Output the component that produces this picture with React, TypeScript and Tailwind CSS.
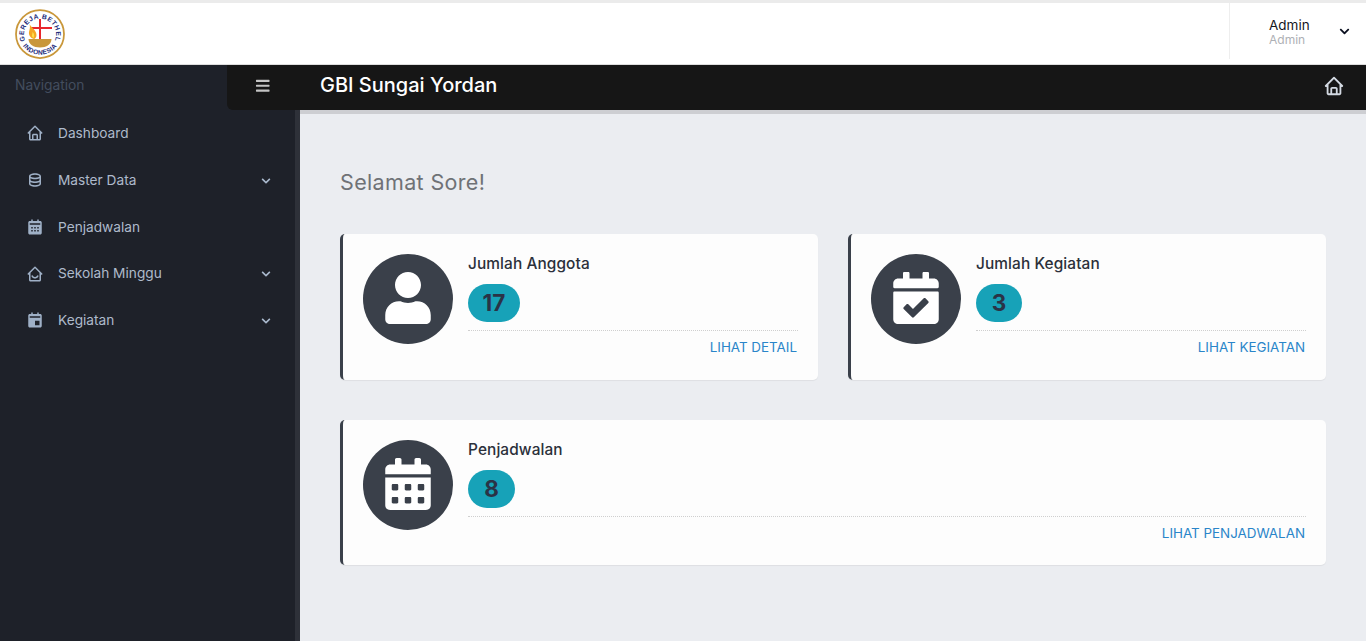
import React from "react";
import { BiHome, BiData, BiSolidCalendar, BiHomeSmile, BiSolidCalendarEvent } from "react-icons/bi";
import { FaBars, FaChevronDown, FaUser, FaCalendarCheck, FaCalendarAlt } from "react-icons/fa";

const font = "font-['Inter','Liberation_Sans',sans-serif]";

function Logo() {
  return (
    <svg width="50" height="50" viewBox="0 0 100 100">
      <circle cx="50" cy="50" r="48" fill="#fff" stroke="#c9973a" strokeWidth="3.5" />
      <defs>
        <path id="arcTop" d="M 19.5 61 A 32 32 0 1 1 80.5 61" />
        <path id="arcBottom" d="M 9 60 A 42.5 42.5 0 0 0 91 60" />
      </defs>
      <text fontSize="13.5" fontWeight="700" fill="#1a2a7a" fontFamily="Liberation Sans, sans-serif" letterSpacing="1">
        <textPath href="#arcTop" startOffset="50%" textAnchor="middle">GEREJA BETHEL</textPath>
      </text>
      <text fontSize="13" fontWeight="700" fill="#1a2a7a" fontFamily="Liberation Sans, sans-serif" letterSpacing="0.8">
        <textPath href="#arcBottom" startOffset="50%" textAnchor="middle">INDONESIA</textPath>
      </text>
      <path d="M48 20h4v16h22v4H52v20h-4V40H32v-4h16z" fill="#e8262c" />
      <path d="M29 30c3 7 14 12 14 22 0 4-2 7-5 8-7-2-11-8-10-14 1-5 3-9 1-16z" fill="#f5a623" />
      <path d="M35 46c3 2 4 6 3 11-2 1-4-1-4-4 0-2 1-4 1-7z" fill="#fde047" />
      <path d="M27 60h46c0 10-10 17-23 17S27 70 27 60z" fill="#c9973a" />
    </svg>
  );
}

function NavItem({ icon, label, chevron }: { icon: React.ReactNode; label: string; chevron?: boolean }) {
  return (
    <div className="flex h-[46.75px] items-center pl-[26px] pr-[24px] text-[13.7px] text-[#aebacb]">
      <span className="flex w-[32px] shrink-0 text-[#9fb0c6]">{icon}</span>
      <span className="flex-1">{label}</span>
      {chevron && <FaChevronDown size={10} className="mt-[1px] text-[#a9b8cc]" />}
    </div>
  );
}

function Card({
  icon,
  title,
  value,
  badgeWidth,
  link,
  className,
}: {
  icon: React.ReactNode;
  title: string;
  value: string;
  badgeWidth: string;
  link: string;
  className: string;
}) {
  return (
    <div className={`flex gap-[15px] rounded-[5px] border-l-[3px] border-[#3a404a] bg-[#fdfdfd] pb-[20px] pl-[20px] pr-[20px] pt-[20px] shadow-[0_1px_1px_rgba(0,0,0,0.06)] ${className}`}>
      <div className="flex h-[90px] w-[90px] shrink-0 items-center justify-center rounded-full bg-[#3a404a] pb-[2px] text-white">
        {icon}
      </div>
      <div className="flex-1">
        <div className="text-[15.4px] font-medium leading-[20px] tracking-[0.1px] text-[#2b303a]">{title}</div>
        <div className={`mt-[10px] flex h-[38px] items-center justify-center rounded-[19px] bg-[#17a2b8] text-[22.5px] font-bold text-[#2a3346] ${badgeWidth}`}>
          {value}
        </div>
        <div className="mt-[8px] border-t border-dotted border-[#cfcfcf] pt-[6px] text-right text-[13.4px] leading-[20px] text-[#2a85c9]">
          <span className="pr-px">{link}</span>
        </div>
      </div>
    </div>
  );
}

export default function App() {
  return (
    <div className={`flex h-screen flex-col overflow-hidden bg-[#ebedf1] ${font}`}>
      <header className="flex h-[65px] shrink-0 items-stretch justify-between border-t-[3px] border-b border-t-[#ebebeb] border-b-[#dedede] bg-white">
        <div className="flex items-center pl-[15px]">
          <Logo />
        </div>
        <div className="mb-[5px] flex w-[137px] items-center border-l border-[#eeeeee] pl-[39px] pr-[16px]">
          <div className="flex-1 pt-[1px]">
            <div className="text-[13.5px] leading-[15px] text-[#16161d]">Admin</div>
            <div className="text-[12px] leading-[13px] text-[#aeb0b5]">Admin</div>
          </div>
          <FaChevronDown size={11} className="text-[#0b1020]" />
        </div>
      </header>
      <div className="flex min-h-0 flex-1">
        <aside className="w-[300px] shrink-0 border-r-[5px] border-[#2e3139] bg-[#1e2129]">
          <div className="-mr-[5px] flex h-[45px] items-center justify-between">
            <span className="pb-[4px] pl-[15px] text-[13.8px] text-[#434d5e]">Navigation</span>
            <div className="flex h-[45px] w-[73px] items-center justify-center rounded-bl-[6px] bg-[#161616] pb-[3px] pr-px text-[#c4c4c4]">
              <FaBars size={15.5} />
            </div>
          </div>
          <nav>
            <NavItem icon={<BiHome size={18} />} label="Dashboard" />
            <NavItem icon={<BiData size={18} />} label="Master Data" chevron />
            <NavItem icon={<BiSolidCalendar size={18} />} label="Penjadwalan" />
            <NavItem icon={<BiHomeSmile size={18} />} label="Sekolah Minggu" chevron />
            <NavItem icon={<BiSolidCalendarEvent size={18} />} label="Kegiatan" chevron />
          </nav>
        </aside>
        <main className="min-w-0 flex-1">
          <div className="flex h-[49px] items-start justify-between border-b-4 border-[#cdced2] bg-[#161616] pl-[20px] pr-[21px] text-white">
            <span className="pt-[8px] text-[20px] font-medium leading-[24px]">GBI Sungai Yordan</span>
            <BiHome size={22} className="mt-[10px] text-[#d3d9e2]" />
          </div>
          <div className="px-[40px] pt-[55px]">
            <h1 className="text-[21.5px] leading-[26px] tracking-[0.35px] text-[#6f7276]">Selamat Sore!</h1>
            <div className="mt-[39px] grid grid-cols-2 gap-x-[30px] gap-y-[40px]">
              <Card
                icon={<FaUser size={52} />}
                title="Jumlah Anggota"
                value="17"
                badgeWidth="w-[52px]"
                link="LIHAT DETAIL"
                className="h-[146px]"
              />
              <Card
                icon={<FaCalendarCheck size={52} />}
                title="Jumlah Kegiatan"
                value="3"
                badgeWidth="w-[46px]"
                link="LIHAT KEGIATAN"
                className="h-[146px]"
              />
              <Card
                icon={<FaCalendarAlt size={52} />}
                title="Penjadwalan"
                value="8"
                badgeWidth="w-[47px]"
                link="LIHAT PENJADWALAN"
                className="col-span-2 h-[145px]"
              />
            </div>
          </div>
        </main>
      </div>
    </div>
  );
}
